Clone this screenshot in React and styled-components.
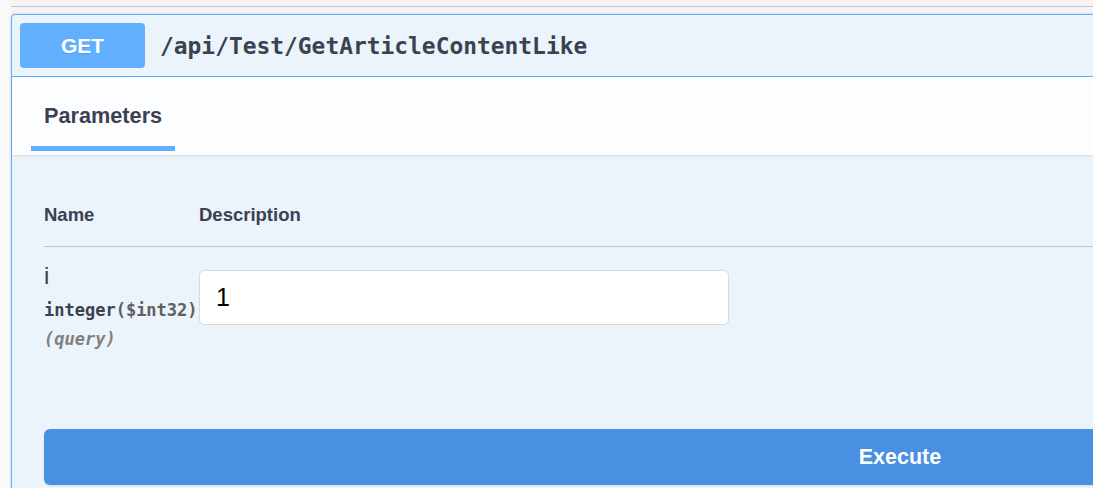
import React from 'react';
import styled, { createGlobalStyle } from 'styled-components';

const GlobalStyle = createGlobalStyle`
    html, body {
        margin: 0;
        padding: 0;
        background: #fafafa;
        overflow: hidden;
    }
    body {
        font-family: "Liberation Sans", Arial, sans-serif;
        color: #3b4151;
    }
`;

const params = [
    { name: 'i', type: 'integer', format: '($int32)', location: '(query)', value: '1' },
];

export default () => (
    <Page>
        <GlobalStyle />
        <TopBar />
        <Opblock>
            <Summary>
                <Method>GET</Method>
                <Path>/api/Test/GetArticleContentLike</Path>
            </Summary>
            <SectionHeader>
                <Tab>
                    <TabLabel>Parameters</TabLabel>
                    <TabLine />
                </Tab>
            </SectionHeader>
            <Body>
                <HeadRow>
                    <NameCol>Name</NameCol>
                    <DescCol>Description</DescCol>
                </HeadRow>
                {params.map(p => (
                    <ParamRow key={p.name}>
                        <NameCol>
                            <ParamName>{p.name}</ParamName>
                            <ParamType>
                                {p.type}<Format>{p.format}</Format>
                            </ParamType>
                            <ParamIn>{p.location}</ParamIn>
                        </NameCol>
                        <DescCol>
                            <Input defaultValue={p.value} />
                        </DescCol>
                    </ParamRow>
                ))}
                <Actions>
                    <ExecuteButton>Execute</ExecuteButton>
                </Actions>
            </Body>
        </Opblock>
    </Page>
);

const Page = styled.div`
    margin-left: 11px;
    background: #f5f5f5;
    min-height: 488px;
`;

const TopBar = styled.div`
    height: 6px;
    border-bottom: 1px solid #c6c6c6;
`;

const Opblock = styled.div`
    margin-top: 7px;
    width: 1778px;
    box-sizing: border-box;
    border: 1px solid #61affe;
    border-radius: 4px;
    background: #ebf3fb;
    box-shadow: 0 0 3px rgba(0, 0, 0, 0.19);
`;

const Summary = styled.div`
    display: flex;
    align-items: center;
    padding: 8px;
    border-bottom: 1px solid #61affe;
`;

const Method = styled.div`
    width: 125px;
    height: 45px;
    display: flex;
    align-items: center;
    justify-content: center;
    background: #61affe;
    border-radius: 4px;
    color: #fff;
    font-weight: bold;
    font-size: 21px;
    text-shadow: 0 1px 0 rgba(0, 0, 0, 0.1);
`;

const Path = styled.span`
    margin-left: 15px;
    font-family: "DejaVu Sans Mono", "Liberation Mono", monospace;
    font-weight: bold;
    font-size: 22.9px;
    color: #3b4151;
`;

const SectionHeader = styled.div`
    display: flex;
    padding: 24px 19px 4px;
    background: #fbfdff;
    box-shadow: 0 1px 2px rgba(0, 0, 0, 0.1);
`;

const Tab = styled.div`
    display: flex;
    flex-direction: column;
`;

const TabLabel = styled.span`
    padding: 0 13px;
    line-height: 30px;
    font-size: 21.7px;
    font-weight: bold;
`;

const TabLine = styled.div`
    margin-top: 15px;
    height: 5px;
    background: #61affe;
`;

const Body = styled.div`
    padding: 0 32px;
`;

const HeadRow = styled.div`
    display: flex;
    padding: 41px 0 12px;
    line-height: 38px;
    font-size: 18.5px;
    font-weight: bold;
    border-bottom: 1px solid rgba(59, 65, 81, 0.25);
`;

const NameCol = styled.div`
    width: 155px;
    display: flex;
    flex-direction: column;
`;

const DescCol = styled.div`
    flex: 1;
`;

const ParamRow = styled.div`
    display: flex;
    padding-top: 15px;
`;

const ParamName = styled.span`
    font-size: 24px;
    line-height: 27px;
`;

const ParamType = styled.span`
    margin-top: 7px;
    line-height: 28px;
    font-family: "DejaVu Sans Mono", "Liberation Mono", monospace;
    font-weight: bold;
    font-size: 17px;
    white-space: nowrap;
`;

const Format = styled.span`
    color: #606060;
`;

const ParamIn = styled.span`
    line-height: 30px;
    font-family: "DejaVu Sans Mono", "Liberation Mono", monospace;
    font-style: italic;
    font-weight: bold;
    font-size: 17px;
    color: #808080;
`;

const Input = styled.input`
    display: block;
    margin-top: 8px;
    width: 530px;
    height: 55px;
    box-sizing: border-box;
    padding: 0 16px;
    border: 1px solid #d9d9d9;
    border-radius: 5px;
    background: #fff;
    font-family: "Liberation Sans", Arial, sans-serif;
    font-size: 25px;
    color: #000;
    outline: none;
`;

const Actions = styled.div`
    padding: 75px 0 30px;
`;

const ExecuteButton = styled.button`
    display: block;
    width: 100%;
    height: 56px;
    border: none;
    border-radius: 6px;
    background: #4990e2;
    color: #fff;
    font-family: "Liberation Sans", Arial, sans-serif;
    font-weight: bold;
    font-size: 21.5px;
    box-shadow: 0 1px 2px rgba(0, 0, 0, 0.1);
`;
